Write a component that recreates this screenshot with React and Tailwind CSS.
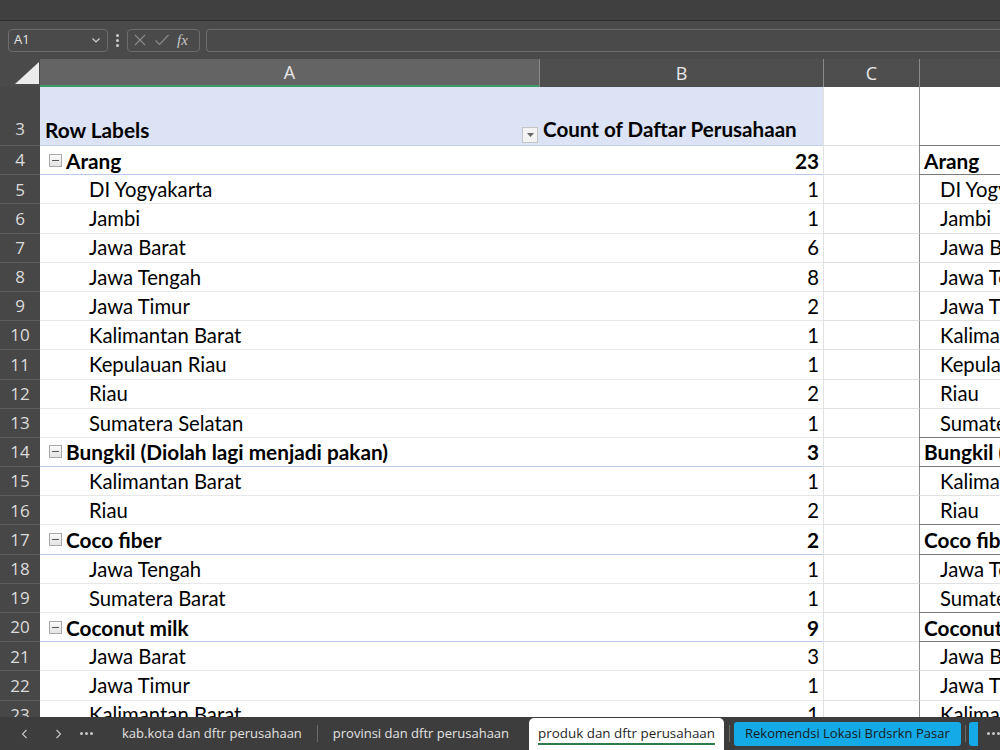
import { useState } from 'react'

const rows = [
    { n: 4, label: 'Arang', count: 23, cat: true },
    { n: 5, label: 'DI Yogyakarta', count: 1 },
    { n: 6, label: 'Jambi', count: 1 },
    { n: 7, label: 'Jawa Barat', count: 6 },
    { n: 8, label: 'Jawa Tengah', count: 8 },
    { n: 9, label: 'Jawa Timur', count: 2 },
    { n: 10, label: 'Kalimantan Barat', count: 1 },
    { n: 11, label: 'Kepulauan Riau', count: 1 },
    { n: 12, label: 'Riau', count: 2 },
    { n: 13, label: 'Sumatera Selatan', count: 1 },
    { n: 14, label: 'Bungkil (Diolah lagi menjadi pakan)', count: 3, cat: true },
    { n: 15, label: 'Kalimantan Barat', count: 1 },
    { n: 16, label: 'Riau', count: 2 },
    { n: 17, label: 'Coco fiber', count: 2, cat: true },
    { n: 18, label: 'Jawa Tengah', count: 1 },
    { n: 19, label: 'Sumatera Barat', count: 1 },
    { n: 20, label: 'Coconut milk', count: 9, cat: true },
    { n: 21, label: 'Jawa Barat', count: 3 },
    { n: 22, label: 'Jawa Timur', count: 1 },
    { n: 23, label: 'Kalimantan Barat', count: 1 },
]

function MinusBox() {
    return (
        <div className="w-[13px] h-[13px] mr-[4px] shrink-0 border border-[#a8a8a8] bg-gradient-to-b from-[#fafafa] to-[#e4e4e4] flex items-center justify-center">
            <div className="w-[7px] h-[1px] bg-[#555]"></div>
        </div>
    )
}

function Chevron({ dir }) {
    return (
        <svg className="w-[12px] h-[12px]" viewBox="0 0 12 12" fill="none" stroke="#c8c8c8" strokeWidth="1.1">
            {dir === 'left' ? <path d="M7.5 2L3.5 6l4 4" /> : <path d="M4.5 2l4 4-4 4" />}
        </svg>
    )
}

function Dots() {
    return (
        <div className="flex items-center gap-[2px]">
            <div className="w-[3px] h-[3px] rounded-full bg-[#c8c8c8]"></div>
            <div className="w-[3px] h-[3px] rounded-full bg-[#c8c8c8]"></div>
            <div className="w-[3px] h-[3px] rounded-full bg-[#c8c8c8]"></div>
        </div>
    )
}

export default function App() {
    const [active] = useState('produk dan dftr perusahaan')

    return (
        <div className="w-[1000px] h-[750px] flex flex-col overflow-hidden bg-[#474747] font-['Open_Sans',sans-serif]">
            {/* Ribbon edge */}
            <div className="h-[21px] shrink-0 bg-[#404040] border-b border-[#2e2e2e]"></div>

            {/* Formula bar */}
            <div className="h-[38px] shrink-0 bg-[#4a4a4a] flex items-center pl-[8px] gap-[6px]">
                <div className="w-[100px] h-[23px] rounded-[4px] border border-[#6c6c6c] flex items-center justify-between px-[5px] text-[13px] text-[#e6e6e6]">
                    <span>A1</span>
                    <svg className="w-[12px] h-[12px]" viewBox="0 0 12 12" fill="none" stroke="#d0d0d0" strokeWidth="1.2"><path d="M2.5 4.5L6 8l3.5-3.5" /></svg>
                </div>
                <div className="flex flex-col gap-[2px] mx-[2px]">
                    <div className="w-[3px] h-[3px] rounded-full bg-[#cfcfcf]"></div>
                    <div className="w-[3px] h-[3px] rounded-full bg-[#cfcfcf]"></div>
                    <div className="w-[3px] h-[3px] rounded-full bg-[#cfcfcf]"></div>
                </div>
                <div className="w-[73px] h-[23px] rounded-[4px] border border-[#6c6c6c] flex items-center px-[5px] gap-[7px]">
                    <svg className="w-[14px] h-[14px]" viewBox="0 0 14 14" fill="none" stroke="#8c8c8c" strokeWidth="1.1"><path d="M2 2l10 10M12 2L2 12" /></svg>
                    <svg className="w-[16px] h-[14px]" viewBox="0 0 16 14" fill="none" stroke="#8c8c8c" strokeWidth="1.1"><path d="M1.5 7.5l4 4L14.5 2" /></svg>
                    <span className="text-[15px] italic text-[#c8c8c8] font-['Liberation_Serif',serif] leading-none">fx</span>
                </div>
                <div className="flex-1 h-[23px] rounded-l-[4px] border border-r-0 border-[#6c6c6c]"></div>
            </div>

            {/* Column headers */}
            <div className="h-[28px] shrink-0 flex bg-[#4e4e4e] text-[18px] text-[#e8e8e8]">
                <div className="w-[40px] shrink-0 flex items-end justify-end pb-[3px] pr-[1px] bg-[#4a4a4a]">
                    <svg className="w-[24px] h-[22px]" viewBox="0 0 24 22"><path d="M24 0V22H0Z" fill="#ececec" /></svg>
                </div>
                <div className="w-[499px] shrink-0 flex items-center justify-center bg-[#646464] border-b-2 border-[#3f9a68]">A</div>
                <div className="w-[284px] shrink-0 flex items-center justify-center border-l border-[#8a8a8a]">B</div>
                <div className="w-[96px] shrink-0 flex items-center justify-center border-l border-[#8a8a8a]">C</div>
                <div className="flex-1 border-l border-[#8a8a8a]"></div>
            </div>

            {/* Sheet */}
            <div className="flex-1 overflow-hidden bg-white font-['Lato',sans-serif] text-[20.3px] text-black">
                {/* Row 3: pivot header */}
                <div className="h-[59px] flex">
                    <div className="w-[40px] shrink-0 bg-[#474747] border-b border-[#5c5c5c] flex items-end justify-center pb-[4px] text-[17px] text-[#dcdcdc] font-['Open_Sans',sans-serif]">3</div>
                    <div className="relative w-[499px] shrink-0 bg-[#dbe3f4] border-b border-[#c3cfea] flex items-end pl-[5px] font-bold text-[20.8px]">
                        Row Labels
                        <div className="absolute right-[1px] bottom-[2px] w-[16px] h-[16px] bg-[#f3f3f3] border border-[#c4c4c4] flex items-center justify-center">
                            <svg className="w-[7px] h-[4px]" viewBox="0 0 7 4"><path d="M0 0h7L3.5 4z" fill="#666" /></svg>
                        </div>
                    </div>
                    <div className="w-[284px] shrink-0 bg-[#dbe3f4] border-b border-[#c3cfea] flex items-end pl-[4px] font-bold text-[20.6px] whitespace-nowrap">Count of Daftar Perusahaan</div>
                    <div className="w-[96px] shrink-0 border-l border-b border-[#e1e1e1]"></div>
                    <div className="flex-1 border-l border-l-[#8e8e8e] border-b border-b-[#7a7a7a]"></div>
                </div>

                {rows.map((r, i) => {
                    const nextCat = rows[i + 1]?.cat
                    return (
                        <div key={r.n} className="h-[29.2px] flex">
                            <div className="w-[40px] shrink-0 bg-[#474747] border-b border-[#5c5c5c] flex items-center justify-center text-[17px] text-[#dcdcdc] font-['Open_Sans',sans-serif]">{r.n}</div>
                            {r.cat ? (
                                <>
                                    <div className="w-[499px] shrink-0 border-b border-[#b9c8e8] flex items-center pl-[9px] font-bold text-[20.8px] whitespace-nowrap">
                                        <MinusBox />
                                        {r.label}
                                    </div>
                                    <div className="w-[284px] shrink-0 border-b border-[#b9c8e8] flex items-center justify-end pr-[4px] font-bold text-[20.8px]">{r.count}</div>
                                </>
                            ) : (
                                <>
                                    <div className="w-[499px] shrink-0 border-b border-[#e8e8e8] flex items-center pl-[49px] whitespace-nowrap">{r.label}</div>
                                    <div className="w-[284px] shrink-0 border-b border-[#e8e8e8] flex items-center justify-end pr-[4px]">{r.count}</div>
                                </>
                            )}
                            <div className="w-[96px] shrink-0 border-l border-b border-[#e1e1e1]"></div>
                            <div className={`flex-1 min-w-0 overflow-hidden whitespace-nowrap flex items-center border-l border-l-[#8e8e8e] border-b ${r.cat || nextCat ? 'border-b-[#7a7a7a]' : 'border-b-[#e1e1e1]'} ${r.cat ? 'pl-[4px] font-bold text-[20.8px]' : 'pl-[20px]'}`}>
                                {r.label}
                            </div>
                        </div>
                    )
                })}
            </div>

            {/* Sheet tabs */}
            <div className="h-[33px] shrink-0 bg-[#3d3d3d] flex items-end text-[13px] text-[#e2e2e2] whitespace-nowrap">
                <div className="h-full flex items-center pl-[19px]">
                    <div className="w-[33px] flex justify-start"><Chevron dir="left" /></div>
                    <div className="w-[26px] flex justify-start"><Chevron dir="right" /></div>
                    <div className="w-[40px] pl-[2px]"><Dots /></div>
                    <span className="ml-[4px]">kab.kota dan dftr perusahaan</span>
                    <div className="w-[1px] h-[17px] bg-[#6a6a6a] mx-[15px]"></div>
                    <span>provinsi dan dftr perusahaan</span>
                </div>
                <div className="h-[32px] ml-[20px] bg-white rounded-t-[5px] px-[9px] flex items-center text-[#1f1f1f] text-[13.4px]">
                    <span className="border-b-2 border-[#2f7d4f] leading-[20px]">{active}</span>
                </div>
                <div className="h-full flex items-center">
                    <div className="w-[1px] h-[17px] bg-[#6a6a6a] ml-[5px] mr-[4px]"></div>
                    <div className="h-[24px] rounded-[3px] bg-[#14aae8] px-[11px] flex items-center text-[#1a1a1a]">Rekomendsi Lokasi Brdsrkn Pasar</div>
                    <div className="w-[1px] h-[17px] bg-[#6a6a6a] ml-[4px] mr-[3px]"></div>
                    <div className="w-[9px] h-[24px] rounded-l-[3px] bg-[#14aae8]"></div>
                    <div className="ml-[9px]"><Dots /></div>
                </div>
            </div>
        </div>
    )
}
